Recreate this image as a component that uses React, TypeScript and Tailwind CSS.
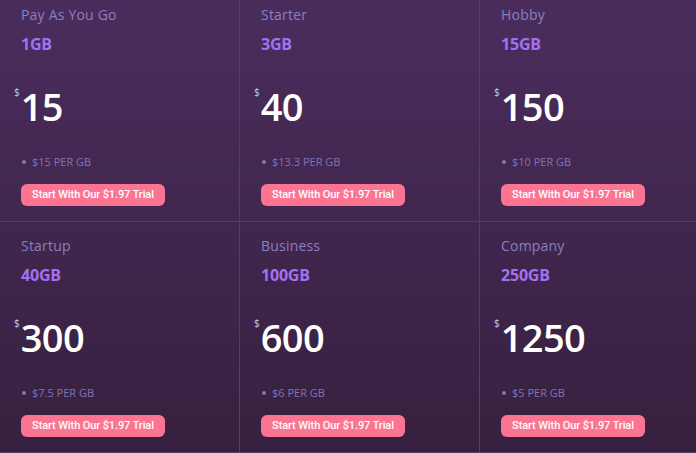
import React from 'react';

interface Plan {
  name: string;
  size: string;
  price: string;
  perGb: string;
}

const plans: Plan[] = [
  { name: 'Pay As You Go', size: '1GB', price: '15', perGb: '$15 PER GB' },
  { name: 'Starter', size: '3GB', price: '40', perGb: '$13.3 PER GB' },
  { name: 'Hobby', size: '15GB', price: '150', perGb: '$10 PER GB' },
  { name: 'Startup', size: '40GB', price: '300', perGb: '$7.5 PER GB' },
  { name: 'Business', size: '100GB', price: '600', perGb: '$6 PER GB' },
  { name: 'Company', size: '250GB', price: '1250', perGb: '$5 PER GB' },
];

function PlanCell({ plan, col }: { plan: Plan; col: number }) {
  return (
    <div
      className={
        'flex flex-col pl-[21px] pt-[14px] pb-[15px] h-[231px] border-b border-[#563c6c] ' +
        (col < 2 ? 'border-r' : '')
      }
    >
      <div className="text-[14px] leading-[20px] text-[#8a7fc0] font-['Open_Sans',sans-serif] tracking-[0.2px]">
        {plan.name}
      </div>
      <div className="mt-[7px] text-[16px] leading-[24px] font-bold text-[#a470f2] font-['Open_Sans',sans-serif] tracking-[-0.2px]">
        {plan.size}
      </div>
      <div className="mt-[30px] -ml-[7px] flex items-start h-[40px]">
        <span className="text-[10px] leading-[10px] mt-[1px] mr-[1px] text-[#cfc6da] font-['Open_Sans',sans-serif]">
          $
        </span>
        <span className="text-[38px] leading-[40px] font-semibold text-white font-['Open_Sans',sans-serif] tracking-[-0.6px]">
          {plan.price}
        </span>
      </div>
      <div className="mt-[28px] flex items-center gap-[6px] h-[16px] text-[11px] uppercase text-[#8075b4] font-['Open_Sans',sans-serif]">
        <span className="w-[4px] h-[4px] rounded-full bg-[#8075b4] ml-[1px]" />
        <span>{plan.perGb}</span>
      </div>
      <button className="mt-[14px] w-[144px] h-[24px] rounded-[6px] bg-[#fb7593] text-white text-[11px] font-medium font-['Roboto',sans-serif] tracking-[-0.1px]">
        Start With Our $1.97 Trial
      </button>
    </div>
  );
}

export default function App() {
  return (
    <div className="w-[696px] h-[453px] overflow-hidden bg-gradient-to-b from-[#4b2d5d] to-[#37203f]">
      <div className="w-[720px] -mt-[9px] grid grid-cols-3">
        {plans.map((plan, i) => (
          <PlanCell key={plan.name} plan={plan} col={i % 3} />
        ))}
      </div>
    </div>
  );
}
